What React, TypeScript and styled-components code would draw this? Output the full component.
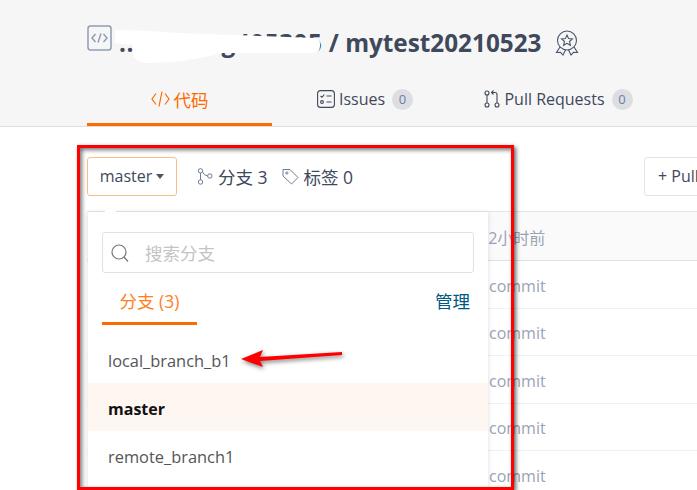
import React from 'react';
import styled, { createGlobalStyle } from 'styled-components';

const cjk = `"Open Sans", "Noto Sans CJK SC", sans-serif`;

const Global = createGlobalStyle`
  html, body { margin: 0; padding: 0; background: #fff; }
  body { font-family: ${cjk}; }
`;

const Page = styled.div`
  position: relative;
  width: 697px;
  height: 490px;
  overflow: hidden;
  background: #fff;
`;

const Header = styled.header`
  height: 126px;
  padding-left: 87px;
  background: #f6f6f6;
  border-bottom: 1px solid #dedede;
  display: flex;
  flex-direction: column;
`;

const TitleRow = styled.div`
  position: relative;
  height: 85px;
  display: flex;
  align-items: flex-start;
  padding-top: 25px;
  box-sizing: border-box;
  color: #40485b;
`;

const TitleText = styled.h1`
  margin: 1px 0 0 7px;
  font-size: 24.3px;
  line-height: 34px;
  font-weight: 700;
  white-space: nowrap;
`;

const Owner = styled.span`
  letter-spacing: 0.55px;
`;

const Scribble = styled.svg`
  position: absolute;
  left: 28px;
  top: 28px;
`;

const Tabs = styled.nav`
  display: flex;
  height: 42px;
`;

const Tab = styled.div<{ $w: number; $active?: boolean }>`
  width: ${(p) => p.$w}px;
  height: 42px;
  box-sizing: border-box;
  display: flex;
  align-items: center;
  justify-content: center;
  gap: 4px;
  padding-bottom: 9px;
  font-size: ${(p) => (p.$active ? 17.5 : 16)}px;
  color: ${(p) => (p.$active ? '#ff6a00' : '#40485b')};
  border-bottom: 3px solid ${(p) => (p.$active ? '#ff6a00' : 'transparent')};
`;

const Badge = styled.span`
  min-width: 21px;
  height: 21px;
  margin-left: 3px;
  border-radius: 50%;
  background: #dcdee2;
  color: #6e7fa5;
  font-size: 13px;
  display: flex;
  align-items: center;
  justify-content: center;
`;

const Main = styled.main`
  position: relative;
  padding-left: 87px;
`;

const Toolbar = styled.div`
  height: 84px;
  display: flex;
  align-items: center;
  padding-top: 14px;
  box-sizing: border-box;
  color: #40485b;
  font-size: 16px;
`;

const BranchButton = styled.button`
  width: 90px;
  height: 39px;
  border: 1px solid #f8bd85;
  border-radius: 3px;
  background: #fff;
  color: #40485b;
  font: inherit;
  display: flex;
  align-items: center;
  justify-content: center;
  gap: 4px;
  padding: 0;
`;

const Caret = styled.i`
  width: 0;
  height: 0;
  margin-top: 1px;
  border-left: 4.5px solid transparent;
  border-right: 4.5px solid transparent;
  border-top: 5px solid #555;
`;

const Stat = styled.span<{ $first?: boolean }>`
  margin-left: ${(p) => (p.$first ? 20 : 14)}px;
  display: flex;
  align-items: center;
  gap: 5px;
  font-size: 17.5px;
`;

const PullButton = styled.button`
  margin-left: auto;
  margin-right: -67px;
  width: 120px;
  height: 39px;
  flex: none;
  border: 1px solid #dfe3ea;
  border-radius: 3px;
  background: #fff;
  color: #40485b;
  font: inherit;
  text-align: left;
  padding: 0 0 0 13px;
  white-space: nowrap;
  overflow: hidden;
`;

const Table = styled.div`
  border-top: 1px solid #e3e6ec;
  color: #9aa3b5;
  font-size: 16px;
`;

const TableHead = styled.div`
  height: 49px;
  box-sizing: border-box;
  padding: 2px 0 0 392px;
  background: #fafafa;
  border-bottom: 1px solid #dde1e8;
  display: flex;
  align-items: center;
`;

const TableRow = styled.div`
  height: 47.5px;
  box-sizing: border-box;
  padding: 3px 0 0 402px;
  border-bottom: 1px solid #eff1f4;
  display: flex;
  align-items: center;
`;

const Dropdown = styled.div`
  position: absolute;
  left: 88px;
  top: 85px;
  width: 400px;
  height: 275px;
  background: #fff;
  box-shadow: 0 1px 5px rgba(60, 70, 90, 0.2);
`;

const Notch = styled.span`
  position: absolute;
  left: 17px;
  top: -2px;
  width: 11px;
  height: 3px;
  background: #fff;
`;

const SearchBox = styled.div`
  margin: 20px 14px 0;
  height: 41px;
  box-sizing: border-box;
  border: 1px solid #dfe2ea;
  border-radius: 3px;
  display: flex;
  align-items: center;
  padding-left: 7px;
  gap: 15px;
  color: #c4c4c4;
  font-size: 17.5px;
`;

const DropTabs = styled.div`
  margin: 8px 18px 10px 14px;
  height: 44px;
  display: flex;
  justify-content: space-between;
  align-items: flex-start;
`;

const DropTab = styled.div`
  width: 95px;
  height: 44px;
  box-sizing: border-box;
  padding-top: 7px;
  text-align: center;
  font-size: 17.5px;
  color: #ff7f1e;
  border-bottom: 3px solid #ff6a00;
`;

const Manage = styled.a`
  padding-top: 7px;
  font-size: 17.5px;
  color: #005980;
`;

const BranchRow = styled.div<{ $current?: boolean }>`
  height: 48px;
  box-sizing: border-box;
  padding: 3px 0 0 20px;
  display: flex;
  align-items: center;
  font-size: ${(p) => (p.$current ? 16 : 16.4)}px;
  font-weight: ${(p) => (p.$current ? 700 : 400)};
  color: ${(p) => (p.$current ? '#111' : '#555')};
  background: ${(p) => (p.$current ? '#fef6f1' : 'transparent')};
`;

const RedFrame = styled.div`
  position: absolute;
  left: 77px;
  top: 145px;
  width: 437px;
  height: 345px;
  box-sizing: border-box;
  border: 3px solid #f00;
  box-shadow: 2px 2px 4px rgba(0, 0, 0, 0.6), inset 2px 2px 4px rgba(0, 0, 0, 0.55);
  pointer-events: none;
`;

const Arrow = styled.svg`
  position: absolute;
  left: 238px;
  top: 344px;
  filter: drop-shadow(1px 2px 2px rgba(0, 0, 0, 0.5));
`;

const slate = '#6f7c96';

const RepoIcon = () => (
  <svg width="25" height="26" viewBox="0 0 25 26" fill="none" stroke="#919db3" strokeWidth="1.5" style={{ flex: 'none' }}>
    <rect x="1" y="1" width="23" height="24" rx="2.5" />
    <path d="M8.5 9 L5 13 L8.5 17 M16.500 9 L20 13 L16.5 17 M14 8.500 L11 17.500" />
  </svg>
);

const AwardIcon = () => (
  <svg width="24" height="26" viewBox="0 0 24 26" fill="none" stroke="#48556f" strokeWidth="1.100" style={{ marginLeft: 14, marginTop: 5, flex: 'none' }}>
    <circle cx="12" cy="10.500" r="9.500" />
    <path d="M12 5 L13.600 8.600 L17.400 9 L14.500 11.500 L15.400 15.300 L12 13.300 L8.600 15.300 L9.500 11.500 L6.600 9 L10.400 8.600 Z" />
    <path d="M5 17 L1.500 22.500 L5.500 22.300 L8 25 L10.500 20 M19 17 L22.500 22.500 L18.500 22.300 L16 25 L13.500 20" />
  </svg>
);

const CodeIcon = () => (
  <svg width="19" height="18" viewBox="0 0 19 18" fill="none" stroke="#ff6a00" strokeWidth="1.200">
    <path d="M5 3.500 L1 9 L5 14.500 M14 3.500 L18 9 L14 14.500 M11 1.500 L8 16.500" />
  </svg>
);

const IssueIcon = () => (
  <svg width="18" height="18" viewBox="0 0 18 18" fill="none" stroke="#40485b" strokeWidth="1.100">
    <rect x="0.600" y="0.600" width="16.800" height="16.800" rx="3" />
    <path d="M3.500 6 L5 7.300 L7.300 4.500 M9.500 6 H14.500 M9.500 12 H14.500" />
    <circle cx="5" cy="12" r="1.400" />
  </svg>
);

const PullIcon = () => (
  <svg width="16" height="18" viewBox="0 0 16 18" fill="none" stroke="#40485b" strokeWidth="1.100">
    <circle cx="3" cy="3" r="2" />
    <circle cx="3" cy="15" r="2" />
    <circle cx="13" cy="15" r="2" />
    <path d="M3 5 V13 M13 13 V4.500 Q13 2.500 11 2.500 H7.500 M9.500 0.500 L7.500 2.500 L9.500 4.500" />
  </svg>
);

const BranchIcon = () => (
  <svg width="16" height="17" viewBox="0 0 16 17" fill="none" stroke={slate} strokeWidth="1">
    <circle cx="3.500" cy="2.800" r="2.200" />
    <circle cx="3.500" cy="14" r="2.200" />
    <circle cx="12.800" cy="8" r="2.200" />
    <path d="M3.500 5 V11.800 M5.500 3.800 Q7 7.500 10.600 8" />
  </svg>
);

const TagIcon = () => (
  <svg width="17" height="17" viewBox="0 0 17 17" fill="none" stroke={slate} strokeWidth="1">
    <path d="M1 1.500 H8 L16 9.500 L9.500 16 L1 8 Z" />
    <circle cx="4.800" cy="5" r="1.100" />
  </svg>
);

const SearchIcon = () => (
  <svg width="20" height="20" viewBox="0 0 20 20" fill="none" stroke="#777" strokeWidth="1.200" style={{ flex: 'none' }}>
    <circle cx="9" cy="9" r="7" />
    <path d="M14 14 L18 18.500" />
  </svg>
);

const commits = ['commit', 'commit', 'commit', 'commit', 'commit'];
const branches = ['local_branch_b1', 'master', 'remote_branch1'];

export default function App() {
  return (
    <Page>
      <Global />
      <Header>
        <TitleRow>
          <RepoIcon />
          <TitleText>
            <Owner>..xxxxxxg405305</Owner> / mytest20210523
          </TitleText>
          <AwardIcon />
          <Scribble width="210" height="36" viewBox="0 0 210 36">
            <path
              d="M0 2 Q30 2 62 5 L200 10 Q206 12 205 18 Q205 25 198 25 L108 25 Q70 35 30 35 Q18 33 18 25 L18 17 L0 15 Z"
              fill="#fff"
            />
          </Scribble>
        </TitleRow>
        <Tabs>
          <Tab $w={185} $active>
            <CodeIcon />
            代码
          </Tab>
          <Tab $w={186}>
            <IssueIcon />
            Issues
            <Badge>0</Badge>
          </Tab>
          <Tab $w={201}>
            <PullIcon />
            Pull Requests
            <Badge>0</Badge>
          </Tab>
        </Tabs>
      </Header>
      <Main>
        <Toolbar>
          <BranchButton>
            master
            <Caret />
          </BranchButton>
          <Stat $first>
            <BranchIcon />
            分支 3
          </Stat>
          <Stat>
            <TagIcon />
            标签 0
          </Stat>
          <PullButton>+ Pull Request</PullButton>
        </Toolbar>
        <Table>
          <TableHead>12小时前</TableHead>
          {commits.map((c, i) => (
            <TableRow key={i}>{c}</TableRow>
          ))}
        </Table>
        <Dropdown>
          <Notch />
          <SearchBox>
            <SearchIcon />
            搜索分支
          </SearchBox>
          <DropTabs>
            <DropTab>分支 (3)</DropTab>
            <Manage>管理</Manage>
          </DropTabs>
          {branches.map((b) => (
            <BranchRow key={b} $current={b === 'master'}>
              {b}
            </BranchRow>
          ))}
        </Dropdown>
      </Main>
      <RedFrame />
      <Arrow width="108" height="26" viewBox="0 0 108 26">
        <path d="M3 15 L25 6 L22 13 L104 8 L104 11 L22 17 L25 23 Z" fill="#f00" />
      </Arrow>
    </Page>
  );
}
